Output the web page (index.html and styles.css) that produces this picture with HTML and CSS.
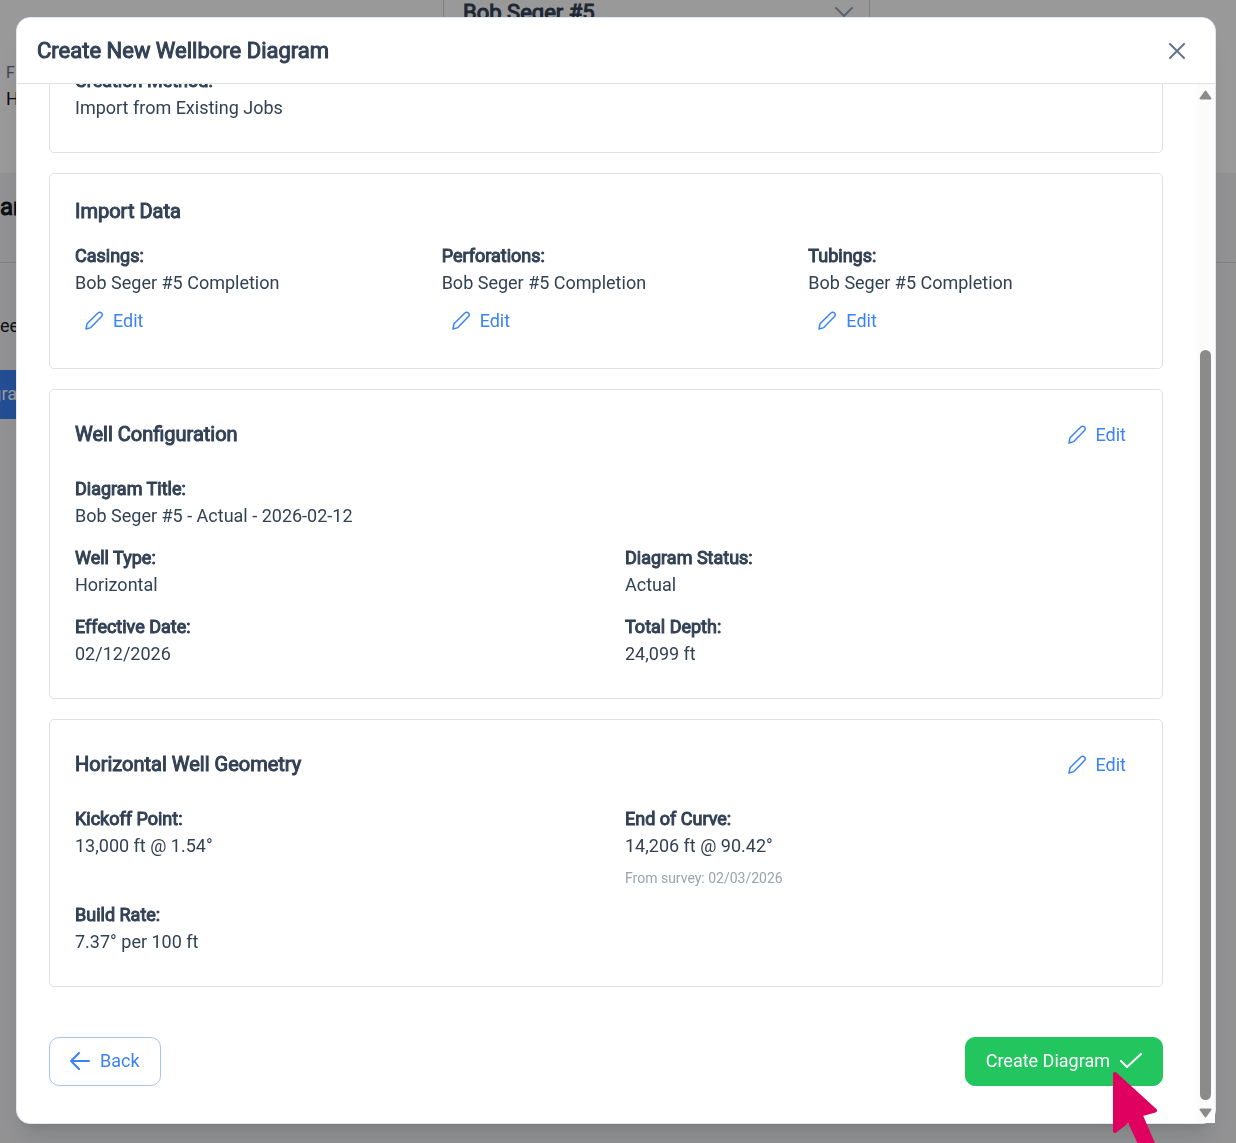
FILE: index.html
```
<!DOCTYPE html>
<html lang="en">
<head>
  <meta charset="UTF-8">
  <meta name="viewport" content="width=device-width, initial-scale=1">
  <title>Create New Wellbore Diagram</title>
  <link rel="stylesheet" href="styles.css">
</head>
<body>

<!-- shared icons -->
<svg class="sprite" aria-hidden="true">
  <symbol id="pencil" viewBox="0 0 19 19">
    <path d="M1 18l1-5.200L12.900 2a2.500 2.500 0 0 1 3.600 0a2.500 2.500 0 0 1 0 3.600L5.800 16.600z"/>
  </symbol>
</svg>

<div class="page">
  <div class="page-top">
    <div class="well-info">
      <span class="info-label">F</span>
      <span class="info-value">H</span>
    </div>
    <button class="well-select" type="button">
      <span>Bob Seger #5</span>
      <svg width="18" height="12" viewBox="0 0 18 12"><path d="M1 2l8 8 8-8"/></svg>
    </button>
  </div>
  <div class="page-title">ar</div>
  <div class="page-content">
    <p>ee</p>
    <button class="page-button" type="button">gra</button>
  </div>
</div>

<div class="overlay">
  <div class="modal" role="dialog" aria-labelledby="modalTitle">
    <div class="modal-header">
      <h1 id="modalTitle">Create New Wellbore Diagram</h1>
      <button class="close-button" type="button" aria-label="Close">
        <svg width="16" height="16" viewBox="0 0 16 16"><path d="M1 1l14 14M15 1L1 15"/></svg>
      </button>
    </div>

    <div class="modal-body">
      <div class="modal-content">
        <section class="card">
          <dl class="fields">
            <div>
              <dt>Creation Method:</dt>
              <dd>Import from Existing Jobs</dd>
            </div>
          </dl>
        </section>

        <section class="card">
          <h2>Import Data</h2>
          <div class="fields three">
            <div>
              <dl>
                <dt>Casings:</dt>
                <dd>Bob Seger #5 Completion</dd>
              </dl>
              <button class="edit-button" type="button"><svg><use href="#pencil"/></svg>Edit</button>
            </div>
            <div>
              <dl>
                <dt>Perforations:</dt>
                <dd>Bob Seger #5 Completion</dd>
              </dl>
              <button class="edit-button" type="button"><svg><use href="#pencil"/></svg>Edit</button>
            </div>
            <div>
              <dl>
                <dt>Tubings:</dt>
                <dd>Bob Seger #5 Completion</dd>
              </dl>
              <button class="edit-button" type="button"><svg><use href="#pencil"/></svg>Edit</button>
            </div>
          </div>
        </section>

        <section class="card">
          <div class="card-header">
            <h2>Well Configuration</h2>
            <button class="edit-button" type="button"><svg><use href="#pencil"/></svg>Edit</button>
          </div>
          <dl class="fields two">
            <div class="wide">
              <dt>Diagram Title:</dt>
              <dd>Bob Seger #5 - Actual - 2026-02-12</dd>
            </div>
            <div>
              <dt>Well Type:</dt>
              <dd>Horizontal</dd>
            </div>
            <div>
              <dt>Diagram Status:</dt>
              <dd>Actual</dd>
            </div>
            <div>
              <dt>Effective Date:</dt>
              <dd>02/12/2026</dd>
            </div>
            <div>
              <dt>Total Depth:</dt>
              <dd>24,099 ft</dd>
            </div>
          </dl>
        </section>

        <section class="card">
          <div class="card-header">
            <h2>Horizontal Well Geometry</h2>
            <button class="edit-button" type="button"><svg><use href="#pencil"/></svg>Edit</button>
          </div>
          <dl class="fields two">
            <div>
              <dt>Kickoff Point:</dt>
              <dd>13,000 ft @ 1.54°</dd>
            </div>
            <div>
              <dt>End of Curve:</dt>
              <dd>14,206 ft @ 90.42°</dd>
              <dd class="note">From survey: 02/03/2026</dd>
            </div>
            <div>
              <dt>Build Rate:</dt>
              <dd>7.37° per 100 ft</dd>
            </div>
          </dl>
        </section>

        <div class="actions">
          <button class="back-button" type="button">
            <svg width="20" height="18" viewBox="0 0 20 18"><path d="M19 9H1M9 1L1 9l8 8"/></svg>
            Back
          </button>
          <button class="create-button" type="button">
            Create Diagram
            <svg width="22" height="16" viewBox="0 0 22 16"><path d="M1 8l6 6L21 1"/></svg>
          </button>
        </div>
      </div>

      <div class="scrollbar" aria-hidden="true">
        <svg width="13" height="10" viewBox="0 0 13 10"><path d="M6.500 1.500L11.500 8.500H1.500z"/></svg>
        <div class="thumb"></div>
        <svg width="13" height="10" viewBox="0 0 13 10"><path d="M1.500 1.500h10L6.500 8.500z"/></svg>
      </div>
    </div>
  </div>
</div>

<svg class="pointer" width="48" height="72" viewBox="0 0 48 72" aria-hidden="true">
  <path d="M4 3L44 39.500L29.500 43.500L43 75L30 75L18 49L4 60z"/>
</svg>

</body>
</html>
```

FILE: styles.css
```
* {
  box-sizing: border-box;
}
body {
  margin: 0;
  height: 100vh;
  overflow: hidden;
  font-family: Roboto, sans-serif;
  font-size: 18px;
  line-height: 27px;
  color: #334155;
}
h1, h2, dl, dt, dd, p {
  margin: 0;
}
button {
  font: inherit;
  cursor: pointer;
}
svg {
  fill: none;
  stroke: currentColor;
  stroke-width: 2;
  stroke-linecap: round;
  stroke-linejoin: round;
  flex-shrink: 0;
}
.sprite {
  display: none;
}

/* page behind the dialog */
.page {
  height: 100vh;
  background: #f3f4f6;
  color: #111827;
}
.page-top {
  display: grid;
  grid-template-columns: 437px 427px;
  height: 173px;
  padding-left: 6px;
  background: #fff;
}
.well-info {
  display: flex;
  flex-direction: column;
  padding-top: 60px;
  line-height: 26px;
}
.info-label {
  font-size: 16px;
  color: #6b7280;
}
.well-select {
  display: flex;
  align-items: center;
  justify-content: space-between;
  height: 24px;
  padding: 0 16px 0 19px;
  border: 1px solid #cbd5e1;
  border-width: 0 1px;
  background: #fff;
  font-size: 22px;
  color: #334155;
}
.well-select svg {
  color: #94a3b8;
}
.page-title {
  height: 90px;
  padding-top: 21px;
  border-bottom: 1px solid #d1d5db;
  font-size: 24px;
}
.page-content {
  padding-top: 49px;
}
.page-button {
  display: flex;
  align-items: center;
  justify-content: flex-end;
  width: 17px;
  height: 49px;
  margin-top: 31px;
  padding: 0 0 2px;
  border: none;
  background: #3b82f6;
  color: #fff;
}

/* dialog */
.overlay {
  position: fixed;
  inset: 0;
  padding: 17px 20px 19px 16px;
  background: rgba(0, 0, 0, 0.4);
}
.modal {
  display: flex;
  flex-direction: column;
  height: 100%;
  border: 1px solid #e2e8f0;
  border-radius: 14px;
  background: #fff;
  box-shadow: 0 20px 25px -5px rgba(0, 0, 0, 0.1), 0 8px 10px -6px rgba(0, 0, 0, 0.1);
}
.modal-header {
  display: flex;
  align-items: center;
  justify-content: space-between;
  height: 66px;
  padding: 0 30px 0 20px;
  border-bottom: 1px solid #dfe1e5;
  flex-shrink: 0;
}
h1, h2, dt, .page-title, .well-select span {
  font-weight: 400;
  -webkit-text-stroke: 1px currentColor;
}
h1 {
  font-size: 22px;
}
h2 {
  font-size: 20px;
}
.close-button {
  display: flex;
  padding: 0;
  border: none;
  background: none;
  color: #64748b;
}
.modal-body {
  display: flex;
  flex: 1;
  min-height: 0;
  overflow: hidden;
}
/* content rests at the end of its scroll */
.modal-content {
  display: flex;
  flex: 1;
  flex-direction: column;
  justify-content: flex-end;
  gap: 20px;
  padding: 0 34px 37px 32px;
}
.card {
  flex-shrink: 0;
  padding: 24px 25px 31px;
  border: 1px solid #dfe1e5;
  border-radius: 5px;
}
.card-header {
  display: flex;
  align-items: center;
  justify-content: space-between;
  height: 41px;
}
.fields {
  display: grid;
  gap: 15px 38px;
}
.fields.two {
  grid-template-columns: repeat(2, 1fr);
  margin-top: 20px;
}
.fields.three {
  grid-template-columns: repeat(3, 1fr);
  margin-top: 17px;
}
.wide {
  grid-column: 1 / -1;
}
.note {
  margin-top: 12px;
  font-size: 14px;
  line-height: 15px;
  color: #9ca3af;
}
.edit-button {
  display: flex;
  align-items: center;
  gap: 9px;
  height: 33px;
  padding: 0 11px 0 10px;
  border: none;
  background: none;
  color: #3b82f6;
}
.edit-button svg {
  width: 19px;
  height: 19px;
  stroke-width: 1.500;
}
.fields .edit-button {
  margin-top: 8px;
}
.actions {
  display: flex;
  justify-content: space-between;
  margin-top: 30px;
}
.back-button, .create-button {
  display: flex;
  align-items: center;
  gap: 10px;
  height: 49px;
  padding: 0 20px 2px;
  border: 1px solid #a9c3ee;
  border-radius: 10px;
  background: #fff;
  color: #3b82f6;
}
.create-button {
  border-color: #22c55e;
  background: #22c55e;
  color: #fff;
}
.scrollbar {
  display: flex;
  flex-direction: column;
  align-items: center;
  width: 18px;
  padding: 6px 1px 5px 0;
  background: #fbfbfb;
  flex-shrink: 0;
}
.scrollbar svg {
  fill: #8b8b8b;
  stroke: #8b8b8b;
}
.thumb {
  width: 11px;
  height: 750px;
  margin: auto 0 8px;
  border-radius: 6px;
  background: #8b8b8b;
}

/* mouse pointer over the create button */
.pointer {
  position: fixed;
  right: 77px;
  bottom: 0;
  fill: #e0005f;
  stroke: #e0005f;
  stroke-width: 4;
}
```
